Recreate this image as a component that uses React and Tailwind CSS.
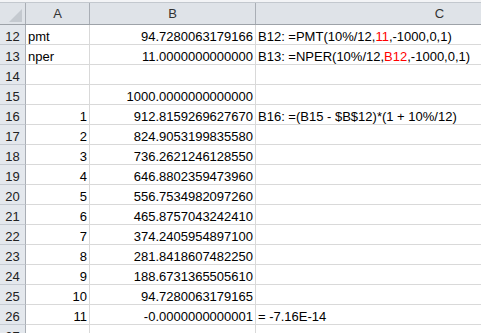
const rows = [
  { n: 12, a: "pmt", aText: true, b: "94.7280063179166", c: ["B12: =PMT(10%/12,", { red: "11" }, ",-1000,0,1)"] },
  { n: 13, a: "nper", aText: true, b: "11.0000000000000", c: ["B13: =NPER(10%/12,", { red: "B12" }, ",-1000,0,1)"] },
  { n: 14 },
  { n: 15, b: "1000.0000000000000" },
  { n: 16, a: "1", b: "912.8159269627670", c: ["B16: =(B15 - $B$12)*(1 + 10%/12)"] },
  { n: 17, a: "2", b: "824.9053199835580" },
  { n: 18, a: "3", b: "736.2621246128550" },
  { n: 19, a: "4", b: "646.8802359473960" },
  { n: 20, a: "5", b: "556.7534982097260" },
  { n: 21, a: "6", b: "465.8757043242410" },
  { n: 22, a: "7", b: "374.2405954897100" },
  { n: 23, a: "8", b: "281.8418607482250" },
  { n: 24, a: "9", b: "188.6731365505610" },
  { n: 25, a: "10", b: "94.7280063179165" },
  { n: 26, a: "11", b: "-0.0000000000001", c: ["= -7.16E-14"] },
  { n: 27 },
]

function Row({ r }) {
  return (
    <div className="flex h-[20px]">
      <div className="w-[26px] shrink-0 flex items-end justify-center bg-[#e4e8ed] border-r border-b border-r-[#a9aeb5] border-b-[#c6cbd2] text-[#222] leading-[15px]">
        {r.n}
      </div>
      <div
        className={
          "w-[64px] shrink-0 flex items-end border-r border-b border-[#d9d9d9] leading-[15px] " +
          (r.aText ? "justify-start pl-[2px]" : "justify-end pr-[2px]")
        }
      >
        {r.a}
      </div>
      <div className="w-[166px] shrink-0 flex items-end justify-end pr-[2px] border-r border-b border-[#d9d9d9] leading-[15px]">
        {r.b}
      </div>
      <div className="w-[368px] shrink-0 flex items-end pl-[2px] border-r border-b border-[#d9d9d9] leading-[15px] whitespace-pre">
        {r.c &&
          r.c.map((p, i) =>
            typeof p === "string" ? (
              <span key={i}>{p}</span>
            ) : (
              <span key={i} className="text-[#ff0000]">
                {p.red}
              </span>
            )
          )}
      </div>
    </div>
  )
}

export default function App() {
  return (
    <div
      className="w-[481px] h-[333px] overflow-hidden bg-white text-black text-[13px]"
      style={{ fontFamily: '"Liberation Sans", Arial, sans-serif' }}
    >
      <div className="h-[3px] bg-[#f3f4f6] border-b border-[#c3c8ce]" />
      <div className="flex h-[22px] bg-[#dfe3e8] border-b border-[#9da2a8] text-[#333]">
        <div className="w-[26px] shrink-0 border-r border-[#a9aeb5] flex items-end justify-end pr-[3px] pb-[2px]">
          <svg width="13" height="13" viewBox="0 0 13 13">
            <polygon points="13,0 13,13 0,13" fill="#c4c9cf" />
          </svg>
        </div>
        <div className="w-[64px] shrink-0 border-r border-[#a9aeb5] flex items-center justify-center">A</div>
        <div className="w-[166px] shrink-0 border-r border-[#a9aeb5] flex items-center justify-center">B</div>
        <div className="w-[368px] shrink-0 border-r border-[#a9aeb5] flex items-center justify-center">C</div>
      </div>
      {rows.map((r) => (
        <Row key={r.n} r={r} />
      ))}
    </div>
  )
}
